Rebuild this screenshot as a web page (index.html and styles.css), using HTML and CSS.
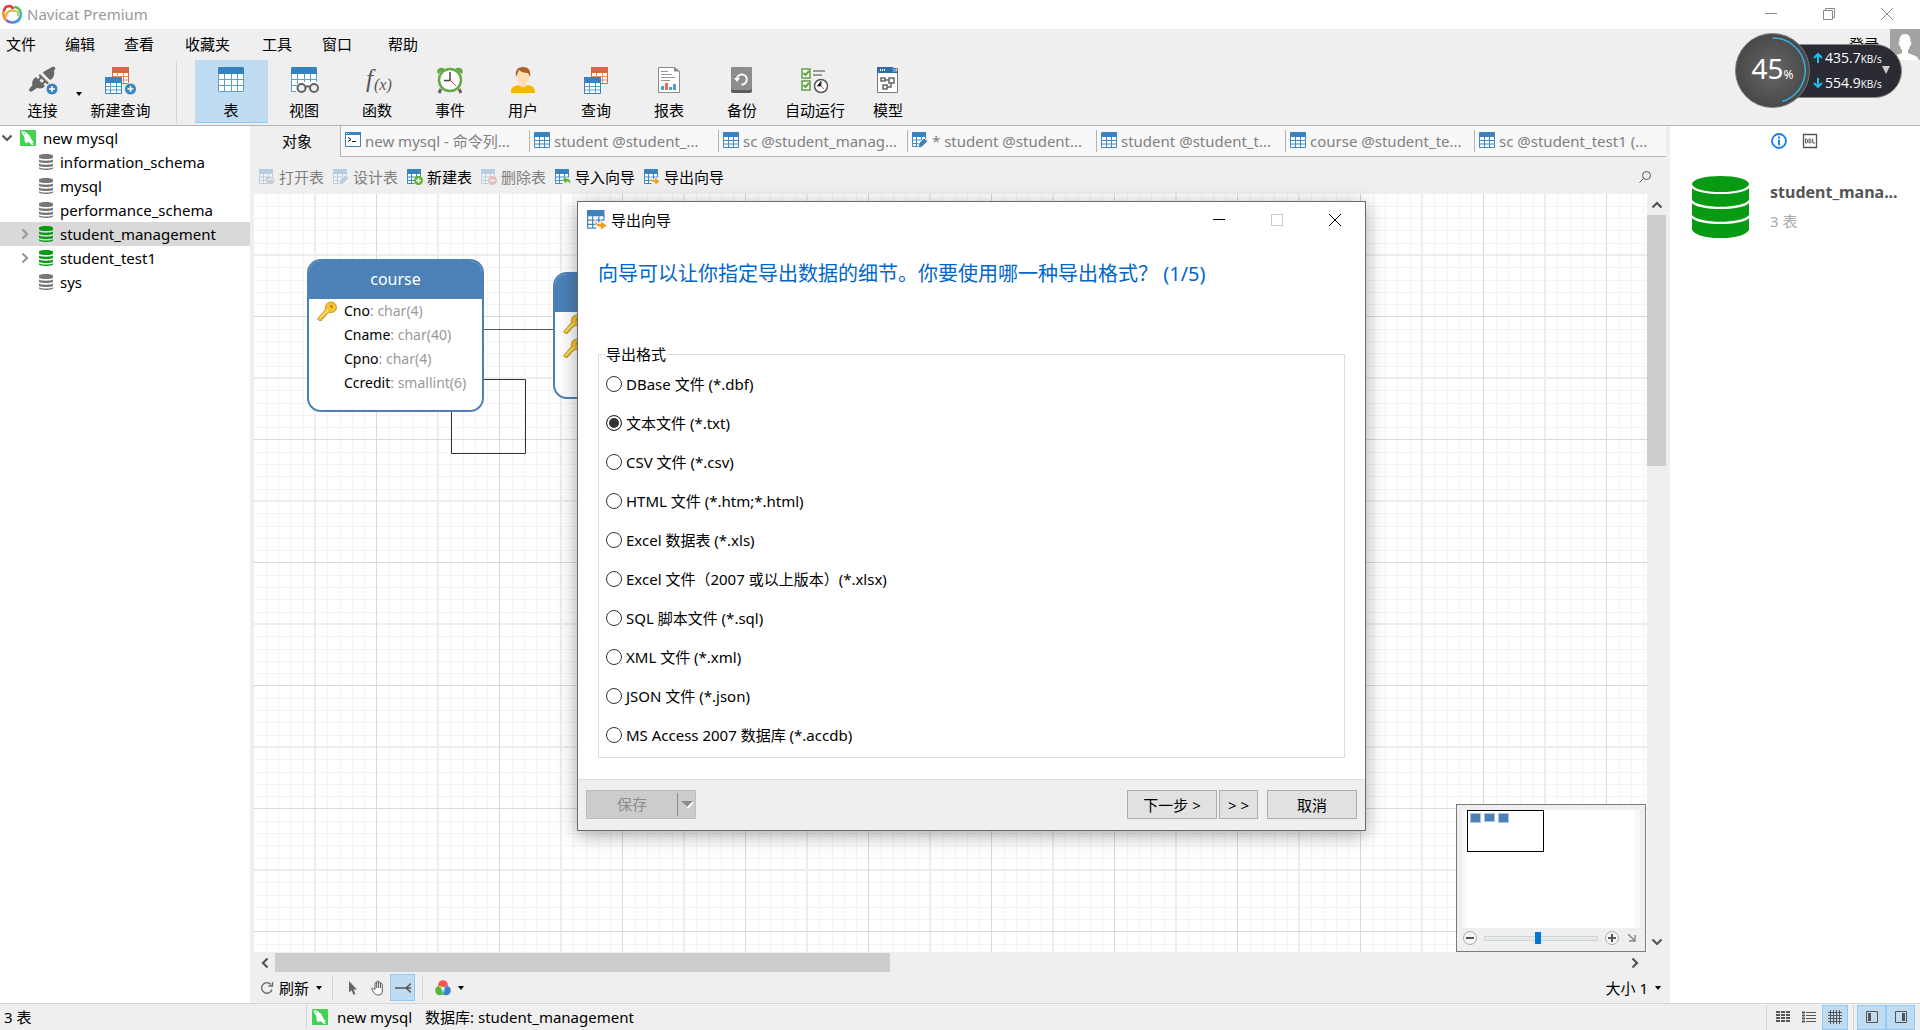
FILE: index.html
```html
<!DOCTYPE html>
<html lang="zh-CN">
<head>
<meta charset="utf-8">
<title>Navicat Premium</title>
<link rel="stylesheet" href="styles.css">
</head>
<body>
<svg class="sprite" aria-hidden="true">
  <defs>
    <symbol id="i-table" viewBox="0 0 16 16"><path fill="#fff" d="M1 4h14v11H1z"/><path fill="#3b82bf" d="M1 0h14a1 1 0 0 1 1 1v4H0V1a1 1 0 0 1 1-1z"/><path fill="none" stroke="#3f88c5" d="M.5 4v11.500h15V4M5.500 5v10M10.500 5v10M1 8.500h14M1 12h14"/></symbol>
    <symbol id="i-table-cut" viewBox="0 0 16 16"><path fill="#fff" d="M1 4h13v4l-7 7H1z"/><path fill="#3b82bf" d="M0 0h14v5H0z"/><path fill="none" stroke="#3f88c5" d="M.5 4v10.500h7M4.500 5v9M9.500 5v5M1 8h13M1 11.500h7M13.500 4v4"/></symbol>
    <symbol id="i-open" viewBox="0 0 16 16"><use href="#i-table-cut"/><path fill="#6b8299" d="M7 8h3l1 1h4v1H9l-2 4z"/><path fill="#6b8299" d="M9 11h7l-2 4H7z"/></symbol>
    <symbol id="i-design" viewBox="0 0 16 16"><use href="#i-table-cut"/><path stroke="#efefef" fill="#3b82bf" d="M6 16l1-5 5-5 4 3-6 6z"/></symbol>
    <symbol id="i-new" viewBox="0 0 16 16"><use href="#i-table-cut"/><circle cx="11.500" cy="11.500" r="4.500" fill="#5cb531"/><path stroke="#fff" stroke-width="1.500" d="M11.500 9v5M9 11.500h5"/></symbol>
    <symbol id="i-delete" viewBox="0 0 16 16"><use href="#i-table-cut"/><circle cx="11.500" cy="11.500" r="4.500" fill="#d9534f"/><path stroke="#fff" stroke-width="1.500" d="M9 11.500h5"/></symbol>
    <symbol id="i-import" viewBox="0 0 16 16"><use href="#i-table-cut"/><path stroke="#efefef" stroke-width=".6" fill="#5cb531" d="M7 11l4.500-4v2.500c3 .2 4.500 2 4.500 6-1-2-2.500-2.800-4.500-2.800V15z"/></symbol>
    <symbol id="i-export" viewBox="0 0 16 16"><use href="#i-table-cut"/><path stroke="#fff" stroke-width=".5" fill="#f59b14" d="M6.500 7c.5 3 1.800 4 4.500 4V8.500l5 4-5 3.500v-2.500C8 13.500 5.500 11.500 6.500 7z"/></symbol>
    <symbol id="i-console" viewBox="0 0 16 16"><path fill="#fff" stroke="#3b82bf" d="M.5.500h15v14H.5z"/><path fill="#3b82bf" d="M0 0h16v3H0z"/><path stroke="#fff" stroke-dasharray="1 1" d="M1 1.500h4"/><path fill="none" stroke="#111" d="M3 5.500l3 2-3 2M7 9.500h4"/></symbol>
    <symbol id="i-db" viewBox="0 0 14 16"><path fill="currentColor" d="M0 2c0-2.600 14-2.600 14 0v1.500c0 2-14 2-14 0zM0 5.500c2 1.600 12 1.600 14 0v2c0 2-14 2-14 0zM0 9.500c2 1.600 12 1.600 14 0v2c0 2-14 2-14 0zM0 13.300c2 1.600 12 1.600 14 0v1c0 2.200-14 2.200-14 0z"/></symbol>
    <symbol id="i-mysql" viewBox="0 0 16 16"><rect width="16" height="16" rx="1" fill="#3fd34f"/><path fill="#fff" d="M1.500 1c2 0 4.500 1 6.500 3 2 1.500 2.500 3.500 3.500 5.500.8 1.500 2 2 2.500 3-1 0-1.500.3-2 .6l2 1.900h-2C10.500 14 9.500 12.500 7.500 12L6.500 13.500 5 12c-1-1.500.3-3-1-5.500C3 4.500 1.500 3.500 1.500 1z"/><path fill="#3fd34f" d="M4 3h1v1H4z"/></symbol>
    <symbol id="i-down" viewBox="0 0 6 4"><path d="M0 0h6L3 4z"/></symbol>
    <symbol id="i-chev" viewBox="0 0 12 12"><path fill="none" stroke="currentColor" stroke-width="2.200" d="M3.500 1.500L8 6l-4.500 4.500"/></symbol>
    <symbol id="i-key" viewBox="0 0 20 20"><path fill="#f2c230" stroke="#b98a17" stroke-width=".8" d="M8.500 8.500C7.500 4 10.500 1 14 1s5.500 2.500 5.500 5.500c0 3.500-3.500 6-7.500 4.800L10 13.500H8.500v1.800H7v2H5v2l-3 .2-1.500-1.700z"/><path stroke="#fbe27c" stroke-width="1.500" d="M3 17l8-8"/><circle cx="14.500" cy="5.500" r="1.300" fill="#a97c10"/></symbol>
    <pattern id="grid" width="123" height="123" patternUnits="userSpaceOnUse">
      <path stroke="#f3f3f3" d="M12.500 0v123M24.500 0v123M36.500 0v123M49.500 0v123M73.500 0v123M86.500 0v123M98.500 0v123M110.500 0v123M0 12.500h123M0 24.500h123M0 36.500h123M0 49.500h123M0 73.500h123M0 86.500h123M0 98.500h123M0 110.500h123"/>
      <path stroke="#ededed" stroke-width="2" d="M61 0v123M0 61h123"/>
      <path stroke="#d9d9d9" d="M122.500 0v123M0 122.500h123"/>
    </pattern>
  </defs>
</svg>

<header class="titlebar">
  <svg class="logo" viewBox="0 0 20 20"><g fill="none" stroke-width="2.600"><path stroke="#8a6bc4" d="M4 16c2 2 4 2.500 6 2.500"/><path stroke="#f0903a" d="M4 16C1 13 1 9 2 6"/><path stroke="#3f9be0" d="M10 18.500c4 0 7-2 8-5"/><path stroke="#3fb9a4" d="M18 14c1-2 1-5 0-7"/><path stroke="#5cba4c" d="M18.200 8c-.5-3-2.700-4.800-6.200-5"/><path stroke="#dd3f2e" d="M2 7c.5-3 2.500-5 5-5 2 0 3.500 1 4 3"/><path stroke="#f2a832" stroke-width="2" d="M4 13c0-5 4-7.500 9-6"/><path stroke="#9ccb4a" stroke-width="1.600" d="M12.500 6.500c3 .5 4 3 3.500 6"/></g></svg>
  <h1 class="app-name">Navicat Premium</h1>
  <div class="win-controls">
    <button aria-label="最小化"><svg viewBox="0 0 14 14"><path d="M1 6.500h12"/></svg></button>
    <button aria-label="还原"><svg viewBox="0 0 14 14"><path d="M1.500 3.500h9v9h-9zM3.500 3V1.500h9v9H11"/></svg></button>
    <button aria-label="关闭"><svg viewBox="0 0 14 14"><path d="M1 1l12 12M13 1L1 13"/></svg></button>
  </div>
</header>

<div class="menurow">
  <nav class="menubar"><button>文件</button><button>编辑</button><button>查看</button><button>收藏夹</button><button>工具</button><button>窗口</button><button>帮助</button></nav>
  <a class="login" href="#">登录</a>
  <svg class="avatar" viewBox="0 0 30 31"><path fill="#a3a3a3" d="M0 0h30v31H0z"/><path fill="#fff" d="M15 5c4 0 6 3 5.500 8 1.500 0 1 3-.5 4-.5 2-1 3-2 4v3c4 2 9 2 11 7H1c2-5 7-5 11-7v-3c-1-1-1.500-2-2-4-1.500-1-2-4-.5-4C9 8 11 5 15 5z"/></svg>
</div>

<div class="toolbar">
  <button class="tool tool-connect">
    <svg viewBox="0 0 32 32"><g fill="#666"><path d="M18 7l6-3.500 3-1L28.500 4 27 7c1 4-1 8-4 9l-7-7c.3-1 1-1.500 2-2zM13 10l9 9-1.500 1.500-2-2-2.500 2.500-1.500-1.500 2.500-2.500-2.500-2.500L12 17l-1.500-1.500 2.500-2.500-1.500-1.500z"/><path d="M9 13l9 9c-2 2.500-5 3-8 2l-6 4-2.500-2 4-5C4.500 18 6 15 9 13z"/></g><circle cx="25" cy="25" r="6" fill="#3b82bf" stroke="#efefef"/><path stroke="#fff" stroke-width="1.500" d="M25 22v6M22 25h6"/></svg>
    <span>连接</span>
  </button>
  <button class="drop" aria-label="连接选项"><svg><use href="#i-down"/></svg></button>
  <button class="tool tool-query">
    <svg viewBox="0 0 32 32"><path fill="#fff" stroke="#d66549" d="M7.500 4.500h16v15h-16z"/><path fill="#d66549" d="M7 3h17v6H7z"/><path stroke="#e08b75" d="M12.500 9v10M18.500 9v10M8 12.500h15M8 16h15"/><path fill="#fff" stroke="#3b82bf" d="M.5 14.500h16v15H.5z"/><path fill="#3b82bf" d="M0 13h17v6H0z"/><path stroke="#5b9dd3" d="M5.500 19v10M11.500 19v10M1 22.500h15M1 26h15"/><circle cx="25.500" cy="25" r="6" fill="#3b82bf" stroke="#efefef"/><path stroke="#fff" stroke-width="1.500" d="M25.500 22v6M22.500 25h6"/></svg>
    <span>新建查询</span>
  </button>
  <i class="rule"></i>
  <button class="tool active">
    <svg viewBox="0 0 32 32"><path fill="#fff" d="M3 8h26v20H3z"/><path fill="#3581be" d="M4 3h24l1 1v6H3V4z"/><path fill="none" stroke="#5a9fd6" d="M3.500 10v17.500h25V10M9.500 10v18M16.500 10v18M22.500 10v18M3 15.500h26M3 21.500h26"/></svg>
    <span>表</span>
  </button>
  <button class="tool">
    <svg viewBox="0 0 32 32"><path fill="#fff" d="M3 8h26v11L9 28H3z"/><path fill="#3581be" d="M4 3h24l1 1v6H3V4z"/><path fill="none" stroke="#5a9fd6" d="M3.500 10v17.500H8M28.500 10v8M9.500 10v10M16.500 10v8M22.500 10v8M3 15.500h26M3 21.500h6"/><g fill="#efefef" stroke="#5f6468" stroke-width="2"><circle cx="13.500" cy="24" r="4"/><circle cx="26" cy="24" r="4"/><path fill="none" d="M17.500 23c1-1 3.500-1 4.500 0"/></g></svg>
    <span>视图</span>
  </button>
  <button class="tool">
    <svg viewBox="0 0 32 32"><g class="fx"><text x="5" y="23" font-size="25">f</text><text x="13" y="26" font-size="16">(x)</text></g></svg>
    <span>函数</span>
  </button>
  <button class="tool">
    <svg viewBox="0 0 32 32"><path stroke="#666" stroke-width="3" d="M7 25l-2 4M25 25l2 4"/><path fill="#64a944" d="M4 10c-3-5 3-8 7-5zM28 10c3-5-3-8-7-5z"/><circle cx="16" cy="16" r="11" fill="#fff" stroke="#64a944" stroke-width="2.500"/><path stroke="#444" stroke-width="1.500" d="M16 8v9M10 16.500h7"/><path stroke="#e6503c" d="M16 16l6 6"/></svg>
    <span>事件</span>
  </button>
  <button class="tool">
    <svg viewBox="0 0 32 32"><path fill="#ffdcb5" d="M10 7h12v7c0 3-2 5-3 6v4h-6v-4c-1-1-3-3-3-6z"/><path fill="#a9602a" d="M9 13c-1-6 1-10 7-10s8 4 7 10l-2-4c-4 0-7-1-9-3z"/><path fill="#f8b500" d="M4 29c0-5 1-7 8-8 2 3 6 3 8 0 7 1 8 3 8 8z"/></svg>
    <span>用户</span>
  </button>
  <button class="tool">
    <svg viewBox="0 0 32 32"><path fill="#fff" stroke="#d66549" d="M11.500 4.500h16v15h-16z"/><path fill="#d66549" d="M11 3h17v6H11z"/><path stroke="#e08b75" d="M16.500 9v10M22.500 9v10M12 12.500h15M12 16h15"/><path fill="#fff" stroke="#3b82bf" d="M4.500 14.500h16v15h-16z"/><path fill="#3b82bf" d="M4 13h17v6H4z"/><path stroke="#5b9dd3" d="M9.500 19v10M15.500 19v10M5 22.500h15M5 26h15"/></svg>
    <span>查询</span>
  </button>
  <button class="tool">
    <svg viewBox="0 0 32 32"><path fill="#fff" stroke="#8a8a8a" d="M5.500 3.500h16l5 4v21h-21z"/><path fill="#8a8a8a" d="M21 3v4.500h6z"/><path stroke="#999" d="M8 7.500h7M8 10.500h11M8 13.500h14M8 16.500h9"/><path fill="#4a9ede" d="M8 22h3v4H8zM16 23h3v3h-3zM20 20h3v6h-3z"/><path fill="#ee6a4d" d="M12 19h3v7h-3z"/></svg>
    <span>报表</span>
  </button>
  <button class="tool">
    <svg viewBox="0 0 32 32"><rect x="5" y="3" width="21" height="26" rx="2" fill="#5d5d5d"/><rect x="5" y="3" width="21" height="23" rx="2" fill="#8d8d8d"/><path fill="none" stroke="#fff" stroke-width="2" d="M11 14a5 5 0 1 1 4.500 6.500"/><path fill="#fff" d="M8 14h6l-3 4z"/></svg>
    <span>备份</span>
  </button>
  <button class="tool">
    <svg viewBox="0 0 32 32"><path fill="#fff" stroke="#5c9f3e" stroke-width="1.500" d="M3 5h8v9H3zM3 17h8v9H3z"/><path fill="none" stroke="#5c9f3e" stroke-width="2" d="M4.500 9l2 2L10 7M4.500 21l2 2 3.500-4"/><path stroke="#999" stroke-width="2" d="M14 7h12M14 11h9"/><circle cx="22" cy="22" r="6.500" fill="#fff" stroke="#555" stroke-width="1.500"/><path stroke="#555" d="M22 17v5h-4"/><path stroke="#e6503c" d="M22 22l3 3"/></svg>
    <span>自动运行</span>
  </button>
  <button class="tool">
    <svg viewBox="0 0 32 32"><path fill="#fff" stroke="#777" d="M5.500 4.500h20v24h-20z"/><path fill="#2f6fa8" d="M5 3h16l5 5v1H5z"/><path fill="#54a3e0" d="M20 3l6 5h-5z"/><path stroke="#fff" stroke-width="2" stroke-dasharray="1 1" d="M8 6h5"/><path fill="none" stroke="#666" stroke-width="1.500" d="M9 14h4v3H9zM17 14h5v5h-5zM11 21h4v4h-4zM13 16h4M15 23h4v-4"/></svg>
    <span>模型</span>
  </button>
</div>

<main class="main">
  <aside class="tree">
    <ul>
      <li class="root"><svg class="chev open"><use href="#i-chev"/></svg><svg class="ico16"><use href="#i-mysql"/></svg>new mysql</li>
      <li><svg class="db"><use href="#i-db"/></svg>information_schema</li>
      <li><svg class="db"><use href="#i-db"/></svg>mysql</li>
      <li><svg class="db"><use href="#i-db"/></svg>performance_schema</li>
      <li class="has-kids selected"><svg class="chev"><use href="#i-chev"/></svg><svg class="db on"><use href="#i-db"/></svg>student_management</li>
      <li class="has-kids"><svg class="chev"><use href="#i-chev"/></svg><svg class="db on"><use href="#i-db"/></svg>student_test1</li>
      <li><svg class="db"><use href="#i-db"/></svg>sys</li>
    </ul>
  </aside>

  <section class="center">
    <div class="tabs">
      <button class="tab-objects">对象</button>
      <div class="tab-strip">
        <button><svg class="ico16"><use href="#i-console"/></svg>new mysql - 命令列...</button>
        <button><svg class="ico16"><use href="#i-table"/></svg>student @student_...</button>
        <button><svg class="ico16"><use href="#i-table"/></svg>sc @student_manag...</button>
        <button><svg class="ico16"><use href="#i-design"/></svg>* student @student...</button>
        <button><svg class="ico16"><use href="#i-table"/></svg>student @student_t...</button>
        <button><svg class="ico16"><use href="#i-table"/></svg>course @student_te...</button>
        <button><svg class="ico16"><use href="#i-table"/></svg>sc @student_test1 (...</button>
      </div>
    </div>
    <div class="actions">
      <button disabled><svg class="ico16"><use href="#i-open"/></svg>打开表</button>
      <button disabled><svg class="ico16"><use href="#i-design"/></svg>设计表</button>
      <button><svg class="ico16"><use href="#i-new"/></svg>新建表</button>
      <button disabled><svg class="ico16"><use href="#i-delete"/></svg>删除表</button>
      <button><svg class="ico16"><use href="#i-import"/></svg>导入向导</button>
      <button><svg class="ico16"><use href="#i-export"/></svg>导出向导</button>
      <button class="search" aria-label="搜索"><svg viewBox="0 0 12 12"><path fill="none" stroke="#555" d="M.5 11.500L4.500 7.500M7.500.500a4 4 0 1 1 0 8 4 4 0 1 1 0-8z"/></svg></button>
    </div>
    <div class="stage">
      <div class="canvas">
        <svg class="grid"><rect width="100%" height="100%" fill="url(#grid)"/><path fill="none" stroke="#555" d="M230 135.500h70"/><path fill="none" stroke="#333" d="M230 185.500h41.500v74h-74V218"/></svg>
        <article class="entity course">
          <h2>course</h2>
          <p><svg class="key"><use href="#i-key"/></svg>Cno<em>: char(4)</em></p>
          <p>Cname<em>: char(40)</em></p>
          <p>Cpno<em>: char(4)</em></p>
          <p>Ccredit<em>: smallint(6)</em></p>
        </article>
        <article class="entity second">
          <h2></h2>
          <p><svg class="key"><use href="#i-key"/></svg></p>
          <p><svg class="key"><use href="#i-key"/></svg></p>
        </article>
        <div class="minimap">
          <div class="mini-view"><div class="mini-frame"><i></i><i class="short"></i><i></i></div></div>
          <div class="mini-zoom">
            <button aria-label="缩小"><svg viewBox="0 0 14 14"><circle cx="7" cy="7" r="6.500" fill="#f6f6f6" stroke="#aaa"/><path stroke="#555" stroke-width="2" d="M3 7h8"/></svg></button>
            <input type="range" aria-label="缩放" min="0" max="100" value="47">
            <button aria-label="放大"><svg viewBox="0 0 14 14"><circle cx="7" cy="7" r="6.500" fill="#f6f6f6" stroke="#aaa"/><path stroke="#555" stroke-width="2" d="M3 7h8M7 3v8"/></svg></button>
            <button class="corner" aria-label="折叠"><svg viewBox="0 0 8 8"><path fill="none" stroke="#888" stroke-width="1.500" d="M0 0l7 7M7 1v6H1"/></svg></button>
          </div>
        </div>
      </div>
      <div class="vscroll"><button aria-label="向上"><svg class="chev up"><use href="#i-chev"/></svg></button><i></i><button aria-label="向下"><svg class="chev open"><use href="#i-chev"/></svg></button></div>
    </div>
    <div class="hscroll"><button aria-label="向左"><svg class="chev left"><use href="#i-chev"/></svg></button><i></i><button aria-label="向右"><svg class="chev"><use href="#i-chev"/></svg></button></div>
    <div class="viewbar">
      <button class="refresh"><svg viewBox="0 0 14 14"><path fill="none" stroke="#666" stroke-width="1.300" d="M12 8.500A5.300 5.300 0 1 1 11 3.500M12.500 1v4H8.500"/></svg>刷新<svg class="tri"><use href="#i-down"/></svg></button>
      <i class="rule"></i>
      <button class="mode" aria-label="选择"><svg viewBox="0 0 16 16"><path fill="#666" d="M4 1l8 8.500H8.500l2 4.500-2 .8-2-4.500L4 12.500z"/></svg></button>
      <button class="mode" aria-label="移动"><svg viewBox="0 0 16 16"><path fill="#fff" stroke="#555" d="M5 9.500V3.500c0-1.300 1.700-1.300 1.700 0V2c0-1.300 1.900-1.300 1.900 0v1c0-1.300 1.900-1.300 1.900 0v1.500c0-1.300 1.800-1.300 1.800 0V11c0 3-1.500 4-4 4-3 0-3.800-1.500-6.500-5.500-.5-1.200.8-1.700 1.700-.8zM6.700 3v5M8.600 3v5M10.500 3v5"/></svg></button>
      <button class="mode active" aria-label="关系"><svg viewBox="0 0 16 16"><path fill="none" stroke="#555" stroke-width="1.500" d="M0 8h16M16 3.500L11 8l5 4.500"/></svg></button>
      <i class="rule"></i>
      <button class="colors" aria-label="颜色"><svg viewBox="0 0 16 16"><circle cx="8" cy="5" r="4.800" fill="#f8554c"/><circle cx="5" cy="10.500" r="4.800" fill="#57bb35"/><circle cx="11" cy="10.500" r="4.800" fill="#3a84c6"/><path fill="#f7d747" d="M3.500 6.500c2-1 4 0 4.500 2z"/><path fill="#d977e8" d="M12.500 6.500c-2-1-4 0-4.500 2z"/><path fill="#6fe3e8" d="M8 7.500c2 2 2 4 0 6-2-2-2-4 0-6z"/><circle cx="8" cy="8.500" r="1.700" fill="#fff"/></svg><svg class="tri"><use href="#i-down"/></svg></button>
      <button class="size">大小 1<svg class="tri"><use href="#i-down"/></svg></button>
    </div>
  </section>

  <aside class="info">
    <div class="info-tabs">
      <button aria-label="信息"><svg viewBox="0 0 16 16"><circle cx="8" cy="8" r="7" fill="#fff" stroke="#1a7ef0" stroke-width="1.800"/><path stroke="#1a7ef0" stroke-width="2" d="M8 3.500v2M8 6.800v5.500"/></svg></button>
      <button aria-label="DDL"><svg viewBox="0 0 16 16"><path fill="#fff" stroke="#555" stroke-width="1.300" d="M1.500 1.500h13v13h-13z"/><path fill="none" stroke="#555" d="M3.500 6h1.200l.8.800v2.400l-.8.800H3.500zM7 6h1.200l.8.800v2.400l-.8.800H7zM10.800 5.500v4.500h2.200"/></svg></button>
    </div>
    <div class="info-body">
      <svg class="bigdb" viewBox="0 0 57 62"><g fill="#089a12"><ellipse cx="28.500" cy="8" rx="28.500" ry="8"/><path d="M0 12c7 8 50 8 57 0v12c-6 9-51 9-57 0zM0 27c7 8 50 8 57 0v12c-6 9-51 9-57 0zM0 42c7 8 50 8 57 0v12c-6 11-51 11-57 0z"/></g></svg>
      <div><h2>student_mana...</h2><p>3 表</p></div>
    </div>
  </aside>
</main>

<footer class="status">
  <span class="count">3 表</span>
  <span class="conn"><svg class="ico16"><use href="#i-mysql"/></svg>new mysql</span>
  <span class="dbname">数据库: student_management</span>
  <div class="views">
    <button aria-label="列表"><svg viewBox="0 0 14 14"><path stroke="#555" stroke-width="2" stroke-dasharray="4 1" d="M0 2h14M0 5h14M0 8h14M0 11h14"/></svg></button>
    <button aria-label="详细信息"><svg viewBox="0 0 14 14"><path stroke="#555" d="M4 2.500h10M4 5.500h10M4 8.500h10M4 11.500h10"/><path stroke="#555" stroke-width="2" d="M0 2.500h3M0 5.500h3M0 8.500h3M0 11.500h3"/></svg></button>
    <button class="active" aria-label="ER 图表"><svg viewBox="0 0 14 14"><path stroke="#555" d="M2.500 0v14M5.500 0v14M8.500 0v14M11.500 0v14M0 2.500h14M0 5.500h14M0 8.500h14M0 11.500h14"/></svg></button>
  </div>
  <div class="views panes">
    <button class="active" aria-label="导航窗格"><svg viewBox="0 0 14 14"><path fill="none" stroke="#555" d="M1.500 1.500h11v11h-11z"/><path fill="#555" d="M3 3h3v8H3z"/></svg></button>
    <button class="active" aria-label="信息窗格"><svg viewBox="0 0 14 14"><path fill="none" stroke="#555" d="M1.500 1.500h11v11h-11z"/><path fill="#555" d="M8 3h3v8H8z"/></svg></button>
  </div>
</footer>

<div class="dialog" role="dialog" aria-labelledby="dlg-title">
  <div class="dlg-bar">
    <svg class="dlg-icon"><use href="#i-export"/></svg>
    <span id="dlg-title">导出向导</span>
    <div class="win-controls">
      <button aria-label="最小化"><svg viewBox="0 0 14 14"><path d="M1 6.500h12"/></svg></button>
      <button disabled aria-label="最大化"><svg viewBox="0 0 14 14"><path d="M1.500 1.500h11v11h-11z"/></svg></button>
      <button aria-label="关闭"><svg viewBox="0 0 14 14"><path d="M1 1l12 12M13 1L1 13"/></svg></button>
    </div>
  </div>
  <h2 class="dlg-head">向导可以让你指定导出数据的细节。你要使用哪一种导出格式？ (1/5)</h2>
  <fieldset class="formats">
    <legend>导出格式</legend>
    <label><input type="radio" name="fmt">DBase 文件 (*.dbf)</label>
    <label><input type="radio" name="fmt" checked>文本文件 (*.txt)</label>
    <label><input type="radio" name="fmt">CSV 文件 (*.csv)</label>
    <label><input type="radio" name="fmt">HTML 文件 (*.htm;*.html)</label>
    <label><input type="radio" name="fmt">Excel 数据表 (*.xls)</label>
    <label><input type="radio" name="fmt">Excel 文件（2007 或以上版本）(*.xlsx)</label>
    <label><input type="radio" name="fmt">SQL 脚本文件 (*.sql)</label>
    <label><input type="radio" name="fmt">XML 文件 (*.xml)</label>
    <label><input type="radio" name="fmt">JSON 文件 (*.json)</label>
    <label><input type="radio" name="fmt">MS Access 2007 数据库 (*.accdb)</label>
  </fieldset>
  <div class="dlg-foot">
    <button class="save" disabled><span>保存</span><svg viewBox="0 0 12 8"><path fill="#fff" d="M1 1h12L7 8z"/><path fill="#8c8c8c" d="M0 0h12L6 6z"/></svg></button>
    <button class="next">下一步 &gt;</button>
    <button class="last">&gt; &gt;</button>
    <button class="cancel">取消</button>
  </div>
</div>

<div class="monitor">
  <div class="speeds">
    <p><svg viewBox="0 0 10 10"><path d="M5 10V1M1 5l4-4 4 4"/></svg>435.7<small>KB/s</small></p>
    <p><svg viewBox="0 0 10 10"><path d="M5 0v9M1 5l4 4 4-4"/></svg>554.9<small>KB/s</small></p>
  </div>
  <svg class="mon-tri" viewBox="0 0 8 8"><path fill="#ccc" d="M0 0h8L4 8z"/></svg>
  <div class="gauge">
    <svg viewBox="0 0 74 74"><path fill="none" stroke="#35b0e6" stroke-width="1.500" d="M37 4a33 33 0 0 1 10 64.500"/></svg>
    <b>45</b><small>%</small>
  </div>
</div>
</body>
</html>
```
FILE: styles.css
```css
* { box-sizing: border-box; }

body {
  margin: 0;
  min-height: 100vh;
  display: flex;
  flex-direction: column;
  position: relative;
  overflow: hidden;
  background: #efefef;
  color: #000;
  font: 15px/20px "Noto Sans", "Noto Sans CJK SC", sans-serif;
}

h1, h2, p, ul { margin: 0; padding: 0; font-weight: 400; }
button {
  margin: 0;
  padding: 0;
  border: 0;
  background: none;
  color: inherit;
  font: inherit;
  white-space: nowrap;
}
svg { display: block; flex: none; }
.sprite { position: absolute; width: 0; height: 0; }
.ico16 { width: 16px; height: 16px; }

/* Title bar */
.titlebar {
  height: 29px;
  display: flex;
  align-items: center;
  gap: 5px;
  padding: 0 0 2px 2px;
  background: #fff;
}
.logo { width: 20px; height: 20px; }
.app-name { font-size: 15px; color: #999; }
.win-controls { margin-left: auto; display: flex; }
.win-controls button { width: 58px; height: 28px; display: grid; place-items: center; }
.win-controls svg { width: 14px; height: 14px; fill: none; stroke: #888; }
.titlebar .win-controls { padding-right: 4px; }

/* Menu */
.menurow { height: 31px; display: flex; align-items: center; }
.menubar {
  display: grid;
  grid-template-columns: 59px 59px 61px 77px 60px 66px auto;
  padding: 0 0 2px 6px;
  justify-items: start;
}
.login { margin-left: auto; margin-right: 11px; padding-bottom: 2px; color: #000; text-decoration: none; }
.avatar { width: 30px; height: 31px; }

/* Main toolbar */
.toolbar {
  height: 66px;
  display: flex;
  padding-bottom: 2px;
  border-bottom: 1px solid #b4b4b4;
}
.tool {
  width: 73px;
  display: flex;
  flex-direction: column;
  align-items: center;
  gap: 4px;
  padding: 4px 1px 0 0;
}
.tool svg { width: 32px; height: 32px; }
.tool.active { background: #bfdcf3; border-bottom: 1px solid #91c9f7; }
.tool-connect { width: 56px; margin-left: 15px; }
.drop { width: 16px; padding-top: 4px; display: grid; place-items: center; }
.drop svg { width: 6px; height: 4px; }
.tool-query { width: 68px; }
.toolbar .rule { width: 1px; height: 62px; margin: 1px 18px 0 21px; background: #d4d4d4; }
.fx { fill: #555; font-family: "Liberation Serif", serif; font-style: italic; }

/* Work area */
.main { flex: 1; display: flex; min-height: 0; }
.tree { width: 250px; background: #fff; }
.tree ul { list-style: none; }
.tree li {
  height: 24px;
  display: flex;
  align-items: center;
  gap: 7px;
  padding-left: 39px;
}
.tree .root { padding-left: 1px; }
.tree .has-kids { padding-left: 19px; }
.tree .selected { background: #d9d9d9; }
.db { width: 14px; height: 16px; color: #777; }
.db.on { color: #089a12; }
.chev { width: 12px; height: 12px; color: #555; }
.has-kids .chev { color: #999; margin-right: 1px; }
.chev.open { transform: rotate(90deg); }
.chev.up { transform: rotate(-90deg); }
.chev.left { transform: rotate(180deg); }

.center {
  flex: 1;
  min-width: 0;
  display: flex;
  flex-direction: column;
  padding: 0 4px;
}
.tabs { height: 31px; display: flex; }
.tab-objects { width: 86px; padding: 0 28px 2px 0; text-align: right; }
.tab-strip {
  flex: 1;
  min-width: 0;
  display: flex;
  padding-right: 3px;
  border-left: 1px solid #b4b4b4;
  border-bottom: 1px solid #b4b4b4;
  background: #f8f8f8;
}
.tab-strip button {
  flex: 1 1 0;
  min-width: 0;
  height: 22px;
  margin-top: 4px;
  padding-left: 4px;
  display: flex;
  align-items: center;
  gap: 4px;
  overflow: hidden;
  color: #808080;
  border-left: 1px solid #b4b4b4;
}
.tab-strip button:first-child { border-left: 0; }
.tab-strip .ico16 { margin-bottom: 2px; }

.actions { height: 37px; display: flex; align-items: center; gap: 9px; padding: 3px 15px 0 5px; }
.actions button { display: flex; align-items: center; gap: 4px; }
.actions button:disabled { color: #808080; }
.actions button:disabled svg { opacity: .3; }
.actions .search { margin-left: auto; }
.search svg { width: 12px; height: 12px; }

.stage { flex: 1; display: flex; min-height: 0; }
.canvas { flex: 1; position: relative; overflow: hidden; background: #fff; }
.grid { position: absolute; inset: 0; width: 100%; height: 100%; }

.entity {
  position: absolute;
  width: 177px;
  border: 2px solid #4c81b8;
  border-radius: 14px;
  background: #fff;
  overflow: hidden;
  font-size: 14px;
}
.entity h2 {
  height: 38px;
  background: #4c81b8;
  color: #fff;
  font-size: 16px;
  line-height: 37px;
  text-align: center;
}
.entity p { height: 24px; line-height: 24px; padding-left: 35px; position: relative; }
.entity em { font-style: normal; color: #999; }
.course { left: 53px; top: 65px; height: 153px; }
.second { left: 299px; top: 78px; height: 127px; }
.key { position: absolute; left: 8px; top: 2px; width: 20px; height: 20px; }

.minimap {
  position: absolute;
  right: 1px;
  bottom: 0;
  width: 190px;
  height: 148px;
  padding: 5px;
  border: 1px solid #7b7b7b;
  background: #efefef;
}
.mini-view { height: 118px; border: 4px solid #f8f8f8; border-width: 0 5px 0 4px; background: #fff; }
.mini-frame {
  width: 77px;
  height: 42px;
  margin-left: 1px;
  padding: 2px;
  display: flex;
  gap: 3px;
  border: 1px solid #000;
}
.mini-frame i { width: 11px; height: 10px; background: #4c81b8; border: 1px solid #a9c4de; }
.mini-frame .short { height: 9px; }
.mini-zoom { height: 20px; display: flex; align-items: center; gap: 7px; padding-left: 1px; }
.mini-zoom svg { width: 14px; height: 14px; }
.mini-zoom .corner { padding-left: 2px; }
.mini-zoom .corner svg { width: 8px; height: 8px; }
.mini-zoom input {
  appearance: none;
  width: 114px;
  height: 12px;
  margin: 0;
  background: none;
}
.mini-zoom input::-webkit-slider-runnable-track {
  height: 5px;
  background: #e6eaea;
  border: 1px solid #d0d4d4;
}
.mini-zoom input::-webkit-slider-thumb {
  appearance: none;
  width: 6px;
  height: 12px;
  margin-top: -5px;
  background: #0078d7;
}

.vscroll { width: 19px; display: flex; flex-direction: column; }
.vscroll i { height: 251px; background: #cdcdcd; }
.vscroll button { height: 21px; display: grid; place-items: center; }
.vscroll button:last-child { margin-top: auto; }
.hscroll { height: 20px; display: flex; padding: 1px 19px 0 0; }
.hscroll button { width: 21px; display: grid; place-items: center; }
.hscroll button:last-child { margin-left: auto; width: 24px; }
.hscroll i { width: 615px; background: #cdcdcd; }

.viewbar { height: 31px; display: flex; align-items: center; padding: 0 5px 0 6px; }
.viewbar button { display: flex; align-items: center; justify-content: center; }
.viewbar .tri { width: 6px; height: 4px; margin-left: 7px; }
.viewbar .rule { width: 1px; height: 25px; margin: 0 7px; background: #d4d4d4; }
.refresh { padding-right: 3px; }
.refresh svg:first-child { width: 14px; height: 14px; margin-right: 5px; }
.viewbar .mode { width: 25px; height: 27px; }
.mode svg, .colors svg:first-child { width: 16px; height: 16px; }
.viewbar .mode.active { background: #bfdcf3; border: 1px solid #91c9f7; }
.colors { padding-left: 5px; }
.viewbar .size { margin-left: auto; }

/* Information pane */
.info { width: 250px; background: #fff; padding-top: 7px; }
.info-tabs { display: flex; justify-content: center; gap: 15px; padding-right: 1px; }
.info-tabs svg { width: 16px; height: 16px; }
.info-body { display: flex; gap: 21px; padding: 27px 0 0 22px; }
.bigdb { width: 57px; height: 62px; }
.info h2 { padding: 6px 0 9px; font-size: 16px; font-weight: 700; color: #555; }
.info p { color: #aaa; }

/* Status bar */
.status {
  height: 27px;
  display: flex;
  align-items: center;
  border-top: 1px solid #d4d4d4;
}
.count { width: 307px; height: 24px; line-height: 24px; padding-left: 4px; border-right: 1px solid #d4d4d4; }
.conn { display: flex; align-items: center; gap: 9px; padding-left: 5px; }
.dbname { padding-left: 13px; }
.views { margin-left: auto; height: 25px; display: flex; padding: 0 5px 0 3px; border-left: 1px solid #d4d4d4; }
.views button { width: 26px; display: grid; place-items: center; }
.views svg { width: 14px; height: 14px; }
.views .active { background: #bfdcf3; border: 1px solid #91c9f7; }
.panes { margin-left: 0; }
.panes button { width: 29px; }

/* Export wizard */
.dialog {
  position: absolute;
  left: 50%;
  top: 201px;
  width: 789px;
  margin-left: -383px;
  border: 1px solid #6a6a6a;
  background: #fff;
  box-shadow: 0 4px 18px rgba(0, 0, 0, .35);
}
.dlg-bar { height: 36px; display: flex; align-items: center; gap: 4px; padding-left: 9px; }
.dlg-icon { width: 20px; height: 20px; }
.dlg-bar .win-controls { padding-right: 1px; }
.dlg-bar .win-controls svg { stroke: #000; }
.dlg-bar .win-controls button:disabled svg { stroke: #c8c8c8; }
.dlg-head { padding: 21px 20px 0; font-size: 20px; line-height: 30px; color: #0066cc; }
.formats {
  margin: 55px 20px 21px;
  padding: 0 8px 3px 7px;
  border: 1px solid #dcdcdc;
}
.formats legend { padding: 0; line-height: 20px; }
.formats label { height: 39px; display: flex; align-items: center; gap: 4px; }
.formats input {
  appearance: none;
  width: 16px;
  height: 16px;
  margin: 0;
  border: 1px solid #333;
  border-radius: 50%;
  background: #fff;
}
.formats input:checked { background: #333; box-shadow: inset 0 0 0 2px #fff; }
.dlg-foot {
  height: 51px;
  display: flex;
  align-items: flex-start;
  gap: 2px;
  padding: 10px 8px 0;
  border-top: 1px solid #dcdcdc;
  background: #efefef;
}
.dlg-foot button { height: 29px; background: #e1e1e1; border: 1px solid #adadad; }
.dlg-foot .save { width: 110px; margin-right: auto; display: flex; align-items: center; color: #8c8c8c; background: #ccc; border-color: #bfbfbf; }
.save span { flex: 1; border-right: 1px solid #8c8c8c; line-height: 23px; }
.save svg { width: 12px; height: 8px; margin: 0 2px 0 3px; }
.dlg-foot .next, .dlg-foot .cancel { width: 90px; }
.dlg-foot .last { width: 39px; margin-right: 7px; }

/* Floating system monitor */
.monitor {
  position: absolute;
  right: 18px;
  top: 33px;
  width: 167px;
  height: 75px;
  color: #fff;
  display: flex;
  align-items: center;
}
.speeds {
  width: 130px;
  height: 54px;
  margin-left: 37px;
  padding: 1px 0 0 40px;
  border: 1px solid #888;
  border-radius: 0 27px 27px 0;
  background: #2b2b33;
  font: 14px/24px "Open Sans", "Noto Sans", sans-serif;
}
.speeds p { display: flex; align-items: baseline; }
.speeds svg { width: 10px; height: 10px; margin-right: 2px; fill: none; stroke: #1fc0ee; stroke-width: 2; }
.speeds small { font-size: 10px; }
.mon-tri { position: absolute; right: 12px; top: 33px; width: 8px; height: 8px; }
.gauge {
  position: absolute;
  left: 0;
  top: 0;
  width: 75px;
  height: 75px;
  display: flex;
  align-items: baseline;
  justify-content: center;
  border: 1px solid #777;
  border-radius: 50%;
  background: radial-gradient(#666, #3d3d3d);
  line-height: 68px;
}
.gauge svg { position: absolute; left: 0; top: 0; width: 73px; height: 73px; }
.gauge b { font-size: 28px; font-weight: 400; }
.gauge small { font-size: 12px; }
```
